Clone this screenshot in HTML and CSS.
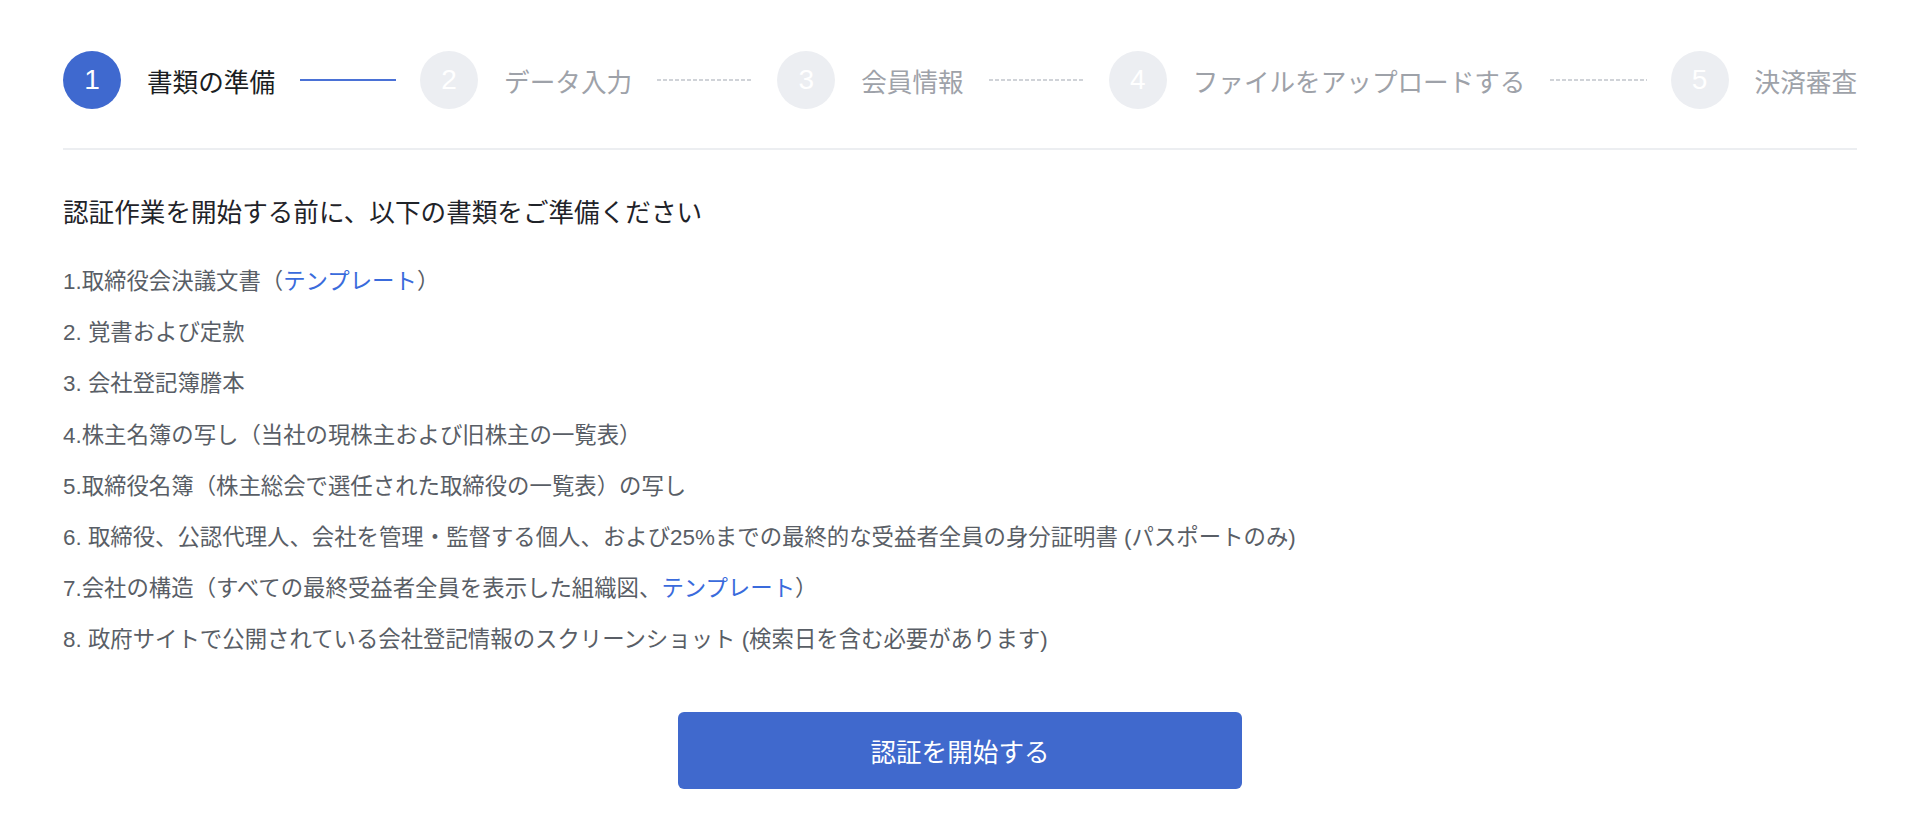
FILE: index.html
```html
<!DOCTYPE html>
<html lang="ja">
<head>
  <meta charset="UTF-8" />
  <meta name="viewport" content="width=device-width, initial-scale=1.0" />
  <title>書類の準備</title>
  <link rel="stylesheet" href="styles.css">
</head>
<body>

  <div class="page">
    <div class="steps">
      <div class="step active">
        <span class="num">1</span>
        <span class="title">書類の準備</span>
      </div>
      <div class="connector done"></div>
      <div class="step">
        <span class="num">2</span>
        <span class="title">データ入力</span>
      </div>
      <div class="connector"></div>
      <div class="step">
        <span class="num">3</span>
        <span class="title">会員情報</span>
      </div>
      <div class="connector"></div>
      <div class="step">
        <span class="num">4</span>
        <span class="title">ファイルをアップロードする</span>
      </div>
      <div class="connector"></div>
      <div class="step">
        <span class="num">5</span>
        <span class="title">決済審査</span>
      </div>
    </div>

    <div class="divider"></div>

    <h2 class="intro">認証作業を開始する前に、以下の書類をご準備ください</h2>

    <ul class="docs">
      <li>1.取締役会決議文書（<a href="#">テンプレート</a>）</li>
      <li>2. 覚書および定款</li>
      <li>3. 会社登記簿謄本</li>
      <li>4.株主名簿の写し（当社の現株主および旧株主の一覧表）</li>
      <li>5.取締役名簿（株主総会で選任された取締役の一覧表）の写し</li>
      <li>6. 取締役、公認代理人、会社を管理・監督する個人、および25%までの最終的な受益者全員の身分証明書 (パスポートのみ)</li>
      <li>7.会社の構造（すべての最終受益者全員を表示した組織図、<a href="#">テンプレート</a>）</li>
      <li>8. 政府サイトで公開されている会社登記情報のスクリーンショット (検索日を含む必要があります)</li>
    </ul>

    <div class="actions">
      <button class="start">認証を開始する</button>
    </div>
  </div>

</body>
</html>
```

FILE: styles.css
```css
*, *::before, *::after {
  box-sizing: border-box;
}

body {
  margin: 0;
  background: #fff;
  color: #1f2329;
  font-family: "Liberation Sans", "Noto Sans CJK JP", sans-serif;
}

.page {
  padding: 51px 63px 40px;
}

.steps {
  display: flex;
  align-items: center;
}

.step {
  display: flex;
  align-items: center;
  gap: 26px;
}

.num {
  width: 58px;
  height: 58px;
  border-radius: 50%;
  background: #eceef2;
  color: #fff;
  font-size: 28px;
  display: flex;
  align-items: center;
  justify-content: center;
}

.title {
  font-size: 25.6px;
  color: #9ea2a9;
  white-space: nowrap;
}

.step.active .num {
  background: #3f69cf;
}

.step.active .title {
  color: #1a1d22;
}

.connector {
  flex: 1;
  height: 2px;
  margin: 0 24px 0 25px;
  background: repeating-linear-gradient(to right, #d0d3d8 0 4px, transparent 4px 6px);
}

.connector.done {
  background: #4a71d6;
}

.divider {
  height: 2px;
  background: #eceef1;
  margin-top: 39px;
}

.intro {
  margin: 44px 0 0;
  font-size: 25.6px;
  font-weight: normal;
  line-height: 38px;
  color: #1f2329;
}

.docs {
  list-style: none;
  margin: 24px 0 0;
  padding: 0;
}

.docs li {
  font-size: 22.4px;
  line-height: 51.2px;
  color: #595e66;
}

.docs a {
  color: #3a6bdc;
  text-decoration: none;
}

.actions {
  display: flex;
  justify-content: center;
  margin-top: 46px;
}

.start {
  width: 564px;
  height: 77px;
  border: none;
  border-radius: 6px;
  background: #4069cd;
  color: #fff;
  font-family: inherit;
  font-size: 25.6px;
  cursor: pointer;
}

.start:hover {
  background: #3559b8;
}
```
